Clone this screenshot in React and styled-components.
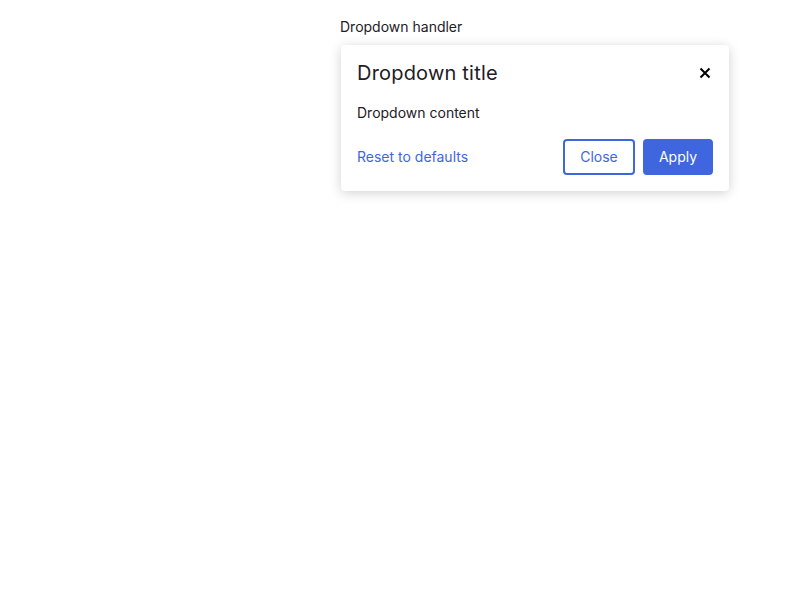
import React from 'react';
import styled, {createGlobalStyle} from 'styled-components';

const GlobalStyle = createGlobalStyle`
    html, body {
        min-height: 100%;
    }
    body {
        margin: 0;
        background: #fff;
        font-family: "Inter", "Liberation Sans", sans-serif;
        color: #1d2024;
    }
`;

const Page = styled.div`
    padding: 18px 0 40px 340px;
`;

const Handler = styled.div`
    font-size: 14px;
    line-height: 18px;
`;

const Dropdown = styled.div`
    margin: 9px 0 0 1px;
    width: 388px;
    box-sizing: border-box;
    padding: 16px;
    background: #fff;
    border-radius: 4px;
    box-shadow: 0 2px 12px rgba(0, 0, 0, 0.18);
`;

const Header = styled.div`
    display: flex;
    align-items: center;
    justify-content: space-between;
    height: 24px;
`;

const Title = styled.h3`
    margin: 0;
    font-size: 20px;
    font-weight: 400;
    line-height: 24px;
    letter-spacing: 0.2px;
`;

const CloseIcon = styled.button`
    display: flex;
    align-items: center;
    justify-content: center;
    width: 16px;
    height: 16px;
    padding: 0;
    border: none;
    background: none;
    color: #000;
    cursor: pointer;
`;

const Content = styled.p`
    margin: 18px 0 0;
    font-size: 14px;
    line-height: 20px;
`;

const Footer = styled.div`
    display: flex;
    align-items: center;
    gap: 8px;
    margin-top: 16px;
`;

const Reset = styled.a`
    margin-right: auto;
    font-size: 14px;
    line-height: 18px;
    color: #3f66de;
    cursor: pointer;
`;

const Button = styled.button`
    width: ${p => p.$primary ? 70 : 72}px;
    height: 36px;
    padding: 0 0 1px;
    box-sizing: border-box;
    border-radius: 4px;
    border: 2px solid #3f66de;
    background: ${p => p.$primary ? '#3f66de' : '#fff'};
    color: ${p => p.$primary ? '#fff' : '#3f66de'};
    font-family: inherit;
    font-size: 14px;
    cursor: pointer;
`;

export default function App() {
    return (
        <>
            <GlobalStyle/>
            <Page>
                <Handler>Dropdown handler</Handler>
                <Dropdown>
                    <Header>
                        <Title>Dropdown title</Title>
                        <CloseIcon aria-label="Close">
                            <svg width="12" height="12" viewBox="0 0 12 12">
                                <path d="M1.5 1.5L10.5 10.5M10.5 1.5L1.5 10.5" stroke="currentColor" strokeWidth="2"/>
                            </svg>
                        </CloseIcon>
                    </Header>
                    <Content>Dropdown content</Content>
                    <Footer>
                        <Reset>Reset to defaults</Reset>
                        <Button>Close</Button>
                        <Button $primary>Apply</Button>
                    </Footer>
                </Dropdown>
            </Page>
        </>
    );
}
